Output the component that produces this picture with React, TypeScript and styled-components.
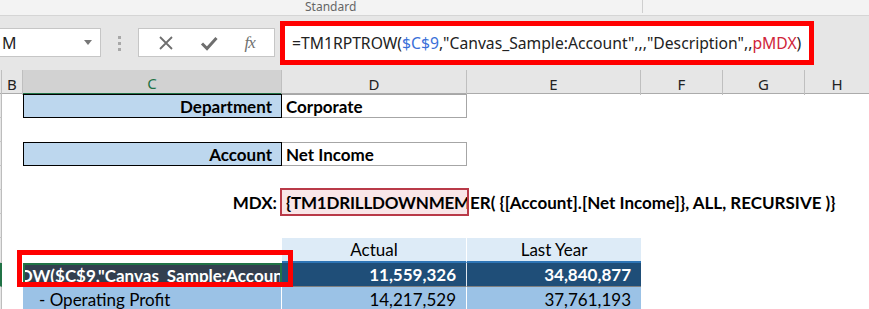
import styled, { createGlobalStyle } from 'styled-components';

const GlobalStyle = createGlobalStyle`
  html, body {
    margin: 0;
    padding: 0;
    background: #ffffff;
    overflow: hidden;
  }
`;

const COLS = '2px 21px 259px 185px 174px 82px 82px 1fr';
const UI_FONT = '"Noto Sans", "Open Sans", sans-serif';
const CELL_FONT = 'Lato, "Liberation Sans", sans-serif';

const Page = styled.div`
  width: 869px;
  height: 309px;
  overflow: hidden;
  position: relative;
  background: #ffffff;
`;

const RibbonStrip = styled.div`
  height: 15px;
  background: #f3f3f3;
  border-bottom: 1px solid #d5d5d5;
  display: flex;
  align-items: flex-start;
  font-family: ${UI_FONT};
  font-size: 12px;
  color: #666666;
  line-height: 13px;
`;

const RibbonLabel = styled.span`
  margin-left: 305px;
  width: 337px;
  height: 13px;
  border-right: 1px solid #cfcfcf;
`;

const FormulaBar = styled.div`
  height: 54px;
  background: #e6e6e6;
  display: flex;
  align-items: flex-start;
  box-sizing: border-box;
`;

const NameBox = styled.div`
  margin-top: 12px;
  width: 101px;
  height: 29px;
  box-sizing: border-box;
  background: #ffffff;
  border: 1px solid #c6c6c6;
  border-left: none;
  display: flex;
  align-items: center;
  justify-content: space-between;
  padding: 0 8px 0 2px;
  font-family: ${UI_FONT};
  font-size: 16px;
  color: #222222;
`;

const DropArrow = styled.span`
  width: 0;
  height: 0;
  border-left: 4px solid transparent;
  border-right: 4px solid transparent;
  border-top: 5px solid #777777;
`;

const Grip = styled.div`
  margin: 20px 0 0 17px;
  width: 3px;
  display: flex;
  flex-direction: column;
  gap: 3px;

  span {
    width: 3px;
    height: 3px;
    background: #a8a8a8;
  }
`;

const ButtonBox = styled.div`
  margin: 12px 0 0 17px;
  width: 137px;
  height: 29px;
  box-sizing: border-box;
  background: #ffffff;
  border: 1px solid #c6c6c6;
  display: flex;
  align-items: center;
  justify-content: space-around;
  padding: 0 6px;
`;

const FxLabel = styled.span`
  font-family: "Liberation Serif", serif;
  font-style: italic;
  font-size: 17px;
  color: #707070;
  letter-spacing: -1px;
`;

const FormulaInput = styled.div`
  margin: 5px 0 0 5px;
  width: 534px;
  height: 44px;
  box-sizing: border-box;
  border: 5px solid #ff0000;
  background: #ffffff;
  display: flex;
  align-items: center;
  padding-left: 7px;
  font-family: ${UI_FONT};
  font-size: 15.7px;
  color: #222222;
  white-space: nowrap;
`;

const Ref = styled.span<{ $tone: 'blue' | 'red' }>`
  color: ${p => (p.$tone === 'blue' ? '#3a6fd8' : '#d0253a')};
`;

const HeaderRow = styled.div`
  display: grid;
  grid-template-columns: ${COLS};
  height: 23px;
  background: #e6e6e6;
  border-bottom: 1px solid #ababab;
`;

const ColHead = styled.div<{ $selected?: boolean }>`
  display: flex;
  align-items: center;
  justify-content: center;
  box-sizing: border-box;
  font-family: ${UI_FONT};
  font-size: 15px;
  padding-top: 3px;
  color: ${p => (p.$selected ? '#217346' : '#222222')};
  background: ${p => (p.$selected ? '#d2d2d2' : 'transparent')};
  border-bottom: ${p => (p.$selected ? '2px solid #217346' : 'none')};
  border-right: 1px solid #bfbfbf;
  &:last-child {
    border-right: none;
  }
`;

const Sheet = styled.div`
  position: relative;
`;

const Row = styled.div<{ $height?: number }>`
  display: grid;
  grid-template-columns: ${COLS};
  height: ${p => p.$height ?? 24}px;
`;

const RowHead = styled.div<{ $selected?: boolean }>`
  background: ${p => (p.$selected ? '#d2d2d2' : '#e6e6e6')};
  border-bottom: 1px solid #c6c6c6;
  border-right: ${p => (p.$selected ? '2px solid #217346' : '1px solid #bdbdbd')};
  box-sizing: border-box;
`;

type CellProps = {
  $fill?: string;
  $align?: 'left' | 'right' | 'center';
  $bold?: boolean;
  $color?: string;
  $pad?: string;
  $border?: string;
  $clip?: boolean;
};

const Cell = styled.div<CellProps>`
  box-sizing: border-box;
  display: flex;
  align-items: center;
  justify-content: ${p => (p.$align === 'right' ? 'flex-end' : p.$align === 'center' ? 'center' : 'flex-start')};
  padding: ${p => p.$pad ?? '0 4px'};
  background: ${p => p.$fill ?? 'transparent'};
  color: ${p => p.$color ?? '#000000'};
  font-family: ${CELL_FONT};
  font-size: 17px;
  font-weight: ${p => (p.$bold ? 700 : 400)};
  white-space: nowrap;
  overflow: ${p => (p.$clip ? 'hidden' : 'visible')};
  ${p => p.$border ?? ''}
`;

const LabelCell = styled(Cell)`
  border: 1px solid #000000;
`;

const ValueCell = styled(Cell)`
  border: 1px solid #a6a6a6;
  border-left: none;
`;

const MdxCell = styled(Cell)`
  background: #f9e6e8;
  outline: 2px solid #b93a48;
  padding-left: 4px;
  letter-spacing: -0.2px;
`;

const EditCell = styled(Cell)`
  background: #333f4f;
  border: 2px solid #217346;
  padding: 0;
  justify-content: flex-start;
`;

const EditText = styled.span`
  margin-left: -6px;
`;

const Callout = styled.div`
  position: absolute;
  left: 17px;
  top: 156px;
  width: 276px;
  height: 37px;
  box-sizing: border-box;
  border: 5px solid #ff0000;
  pointer-events: none;
`;

const HEAD_FILL = '#ddebf7';
const TOTAL_FILL = '#1f4e78';
const LINE_FILL = '#9bc2e6';

const Empty = () => (
  <Row>
    <RowHead />
  </Row>
);

export default function App() {
  return (
    <Page>
      <GlobalStyle />
      <RibbonStrip>
        <RibbonLabel>Standard</RibbonLabel>
      </RibbonStrip>

      <FormulaBar>
        <NameBox>
          <span>M</span>
          <DropArrow />
        </NameBox>
        <Grip>
          <span />
          <span />
          <span />
        </Grip>
        <ButtonBox>
          <svg width='16' height='16' viewBox='0 0 16 16'>
            <path d='M2 2 L14 14 M14 2 L2 14' stroke='#6e6e6e' strokeWidth='1.8' fill='none' />
          </svg>
          <svg width='18' height='16' viewBox='0 0 18 16'>
            <path d='M2 8.5 L7 13.5 L16.5 3' stroke='#6e6e6e' strokeWidth='3' fill='none' />
          </svg>
          <FxLabel>fx</FxLabel>
        </ButtonBox>
        <FormulaInput>
          =TM1RPTROW(<Ref $tone='blue'>$C$9</Ref>,"Canvas_Sample:Account",,,"Description",,
          <Ref $tone='red'>pMDX</Ref>)
        </FormulaInput>
      </FormulaBar>

      <HeaderRow>
        <ColHead />
        <ColHead>B</ColHead>
        <ColHead $selected>C</ColHead>
        <ColHead>D</ColHead>
        <ColHead>E</ColHead>
        <ColHead>F</ColHead>
        <ColHead>G</ColHead>
        <ColHead>H</ColHead>
      </HeaderRow>

      <Sheet>
        <Row>
          <RowHead />
          <div />
          <LabelCell $fill='#bdd7ee' $align='right' $bold $pad='0 9px 0 4px'>
            Department
          </LabelCell>
          <ValueCell $bold>Corporate</ValueCell>
        </Row>
        <Empty />
        <Row>
          <RowHead />
          <div />
          <LabelCell $fill='#bdd7ee' $align='right' $bold $pad='0 9px 0 4px'>
            Account
          </LabelCell>
          <ValueCell $bold>Net Income</ValueCell>
        </Row>
        <Empty />
        <Row>
          <RowHead />
          <div />
          <Cell $align='right' $bold $pad='0 5px 0 4px'>
            MDX:
          </Cell>
          <MdxCell $bold $clip>
            {'{TM1DRILLDOWNMEMEB'}
          </MdxCell>
          <Cell $bold $pad='0 0 0 3px'>
            {'ER( {[Account].[Net Income]}, ALL, RECURSIVE )}'}
          </Cell>
        </Row>
        <Empty />
        <Row $height={25}>
          <RowHead />
          <div />
          <div />
          <Cell $fill={HEAD_FILL} $align='center' $border='border-right: 1px solid #ffffff; border-bottom: 2px solid #2e75b6;'>
            Actual
          </Cell>
          <Cell $fill={HEAD_FILL} $align='center' $border='border-bottom: 2px solid #2e75b6;'>
            Last Year
          </Cell>
        </Row>
        <Row>
          <RowHead $selected />
          <div />
          <EditCell $bold $color='#ffffff' $clip>
            <EditText>OW($C$9,"Canvas_Sample:Account",,,"Description",,pMDX)</EditText>
          </EditCell>
          <Cell
            $fill={TOTAL_FILL}
            $align='right'
            $bold
            $color='#ffffff'
            $pad='0 10px 0 4px'
            $border='border-right: 1px solid #dfe6ee; border-bottom: 1px solid #808080;'
          >
            11,559,326
          </Cell>
          <Cell
            $fill={TOTAL_FILL}
            $align='right'
            $bold
            $color='#ffffff'
            $pad='0 10px 0 4px'
            $border='border-bottom: 1px solid #808080;'
          >
            34,840,877
          </Cell>
        </Row>
        <Row>
          <RowHead />
          <div />
          <Cell $fill={LINE_FILL} $pad='0 4px 0 16px' $border='border-right: 1px solid #ffffff;'>
            - Operating Profit
          </Cell>
          <Cell $fill={LINE_FILL} $align='right' $pad='0 10px 0 4px' $border='border-right: 1px solid #ffffff;'>
            14,217,529
          </Cell>
          <Cell $fill={LINE_FILL} $align='right' $pad='0 10px 0 4px'>
            37,761,193
          </Cell>
        </Row>
        <Callout />
      </Sheet>
    </Page>
  );
}
